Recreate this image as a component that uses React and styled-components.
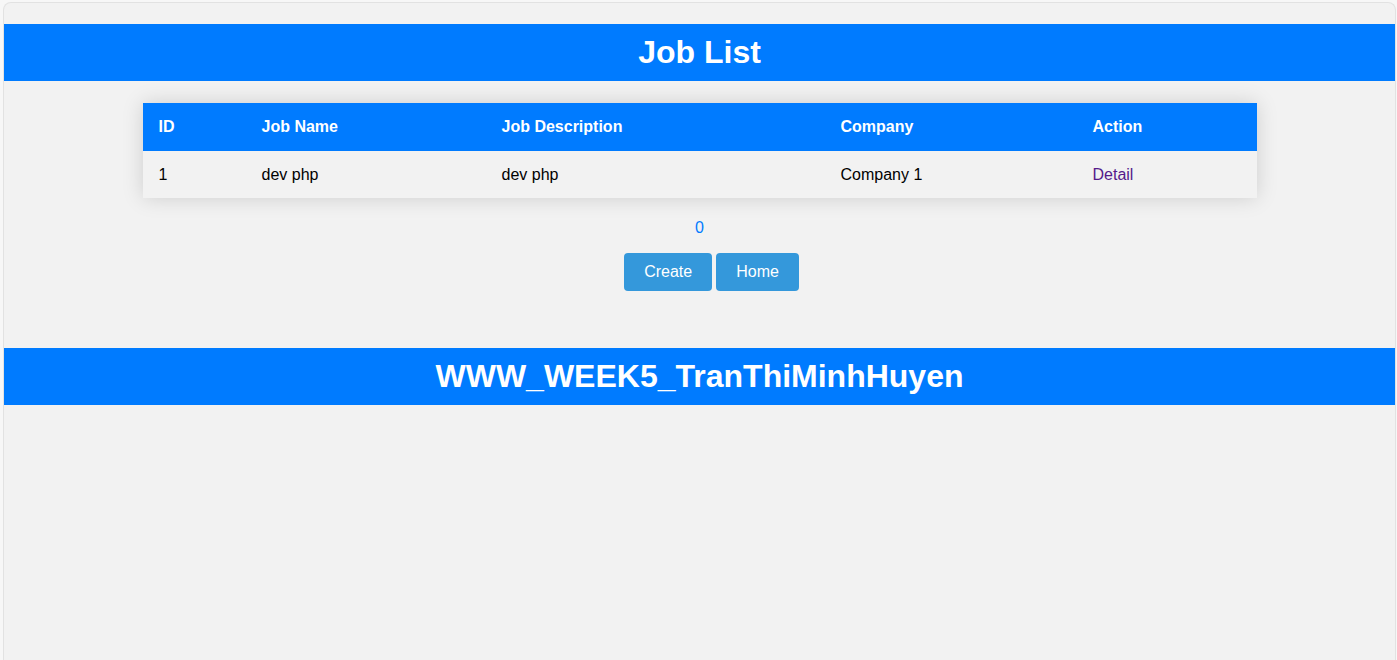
import React from 'react';
import styled, { createGlobalStyle } from 'styled-components';

const GlobalStyle = createGlobalStyle`
  html, body {
    margin: 0;
    padding: 0;
    background: #f7f7f7;
    font-family: "Liberation Sans", Arial, sans-serif;
  }
`;

const Frame = styled.div`
  margin: 2px 1px 0 3px;
  min-height: 658px;
  box-sizing: border-box;
  border: 1px solid #e2e2e2;
  border-bottom: none;
  border-radius: 8px 8px 0 0;
  background: #f2f2f2;
  overflow: hidden;
`;

const Banner = styled.h1`
  margin: 21px 0 22px;
  padding: 10px 0;
  background: #007bff;
  color: #fff;
  text-align: center;
  font-size: 32px;
  line-height: 37px;
  font-weight: bold;
`;

const Table = styled.table`
  width: 1114px;
  margin: 0 auto;
  table-layout: fixed;
  border-collapse: collapse;
  box-shadow: 0 0 20px rgba(0, 0, 0, 0.15);
  font-size: 16px;
`;

const Th = styled.th`
  background: #007bff;
  color: #fff;
  text-align: left;
  font-weight: bold;
  padding: 15px 16px;
  line-height: 18px;
  width: ${p => p.$w - 32}px;
`;

const Td = styled.td`
  padding: 15px 16px 14px;
  line-height: 18px;
  color: #000;
  background: #f2f2f2;
`;

const DetailLink = styled.a`
  color: #551a8b;
  text-decoration: none;
`;

const Pager = styled.div`
  margin-top: 21px;
  text-align: center;
  line-height: 18px;
  color: #007bff;
  font-size: 16px;
`;

const Actions = styled.div`
  display: flex;
  justify-content: center;
  gap: 4px;
  margin: 16px 0 57px;
  padding-left: 24px;
`;

const Button = styled.button`
  background: #3498db;
  color: #fff;
  border: none;
  border-radius: 4px;
  padding: 10px 20px;
  font-family: inherit;
  font-size: 16px;
  line-height: 18px;
  cursor: pointer;
`;

const jobs = [
  { id: 1, name: 'dev php', description: 'dev php', company: 'Company 1' },
];

export default function App() {
  return (
    <>
      <GlobalStyle />
      <Frame>
        <Banner>Job List</Banner>
        <Table>
          <thead>
            <tr>
              <Th $w={103}>ID</Th>
              <Th $w={240}>Job Name</Th>
              <Th $w={339}>Job Description</Th>
              <Th $w={252}>Company</Th>
              <Th $w={180}>Action</Th>
            </tr>
          </thead>
          <tbody>
            {jobs.map(job => (
              <tr key={job.id}>
                <Td>{job.id}</Td>
                <Td>{job.name}</Td>
                <Td>{job.description}</Td>
                <Td>{job.company}</Td>
                <Td><DetailLink href="#">Detail</DetailLink></Td>
              </tr>
            ))}
          </tbody>
        </Table>
        <Pager>0</Pager>
        <Actions>
          <Button>Create</Button>
          <Button>Home</Button>
        </Actions>
        <Banner>WWW_WEEK5_TranThiMinhHuyen</Banner>
      </Frame>
    </>
  );
}
